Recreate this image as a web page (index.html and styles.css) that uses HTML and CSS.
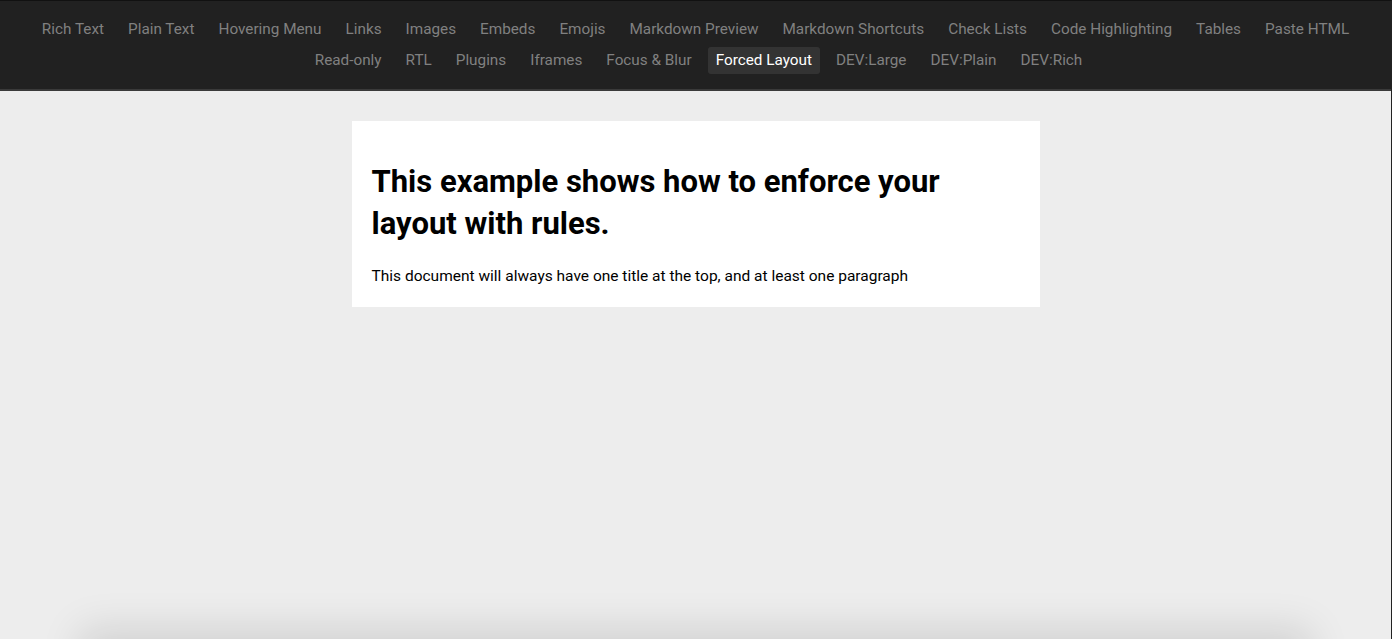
FILE: index.html
```html
<!DOCTYPE html>
<html>
<head>
<meta charset="utf-8">
<link rel="stylesheet" href="styles.css">
</head>
<body>
<div class="frame">
  <nav class="tabs">
    <div class="tab-row">
      <a class="tab">Rich Text</a>
      <a class="tab">Plain Text</a>
      <a class="tab">Hovering Menu</a>
      <a class="tab">Links</a>
      <a class="tab">Images</a>
      <a class="tab">Embeds</a>
      <a class="tab">Emojis</a>
      <a class="tab">Markdown Preview</a>
      <a class="tab">Markdown Shortcuts</a>
      <a class="tab">Check Lists</a>
      <a class="tab">Code Highlighting</a>
      <a class="tab">Tables</a>
      <a class="tab">Paste HTML</a>
    </div>
    <div class="tab-row tab-row-second">
      <a class="tab">Read-only</a>
      <a class="tab">RTL</a>
      <a class="tab">Plugins</a>
      <a class="tab">Iframes</a>
      <a class="tab">Focus &amp; Blur</a>
      <a class="tab active">Forced Layout</a>
      <a class="tab">DEV:Large</a>
      <a class="tab">DEV:Plain</a>
      <a class="tab">DEV:Rich</a>
    </div>
  </nav>
  <main class="example">
    <h1 class="title">This example shows how to enforce your layout with rules.</h1>
    <p class="para">This document will always have one title at the top, and at least one paragraph</p>
  </main>
  <div class="window-shadow"></div>
</div>
</body>
</html>
```

FILE: styles.css
```css
html, body {
  margin: 0;
  padding: 0;
  height: 100%;
}
body {
  background: #ededed;
  font-family: Roboto, "Liberation Sans", sans-serif;
  overflow: hidden;
}
.frame {
  min-height: 100%;
  box-sizing: border-box;
  border-right: 1px solid #222;
  border-top: 1px solid #111;
  position: relative;
  overflow: hidden;
}
.tabs {
  background: #212121;
  border-bottom: 2px solid #3a3a3a;
  padding: 15px 0 15px;
  display: flex;
  flex-direction: column;
  align-items: center;
  gap: 4px;
  margin-bottom: 30px;
}
.tab-row {
  display: flex;
  justify-content: center;
  gap: 8px;
  white-space: nowrap;
}
.tab-row-second {
  padding-left: 6px;
}
.tab {
  color: #808080;
  font-size: 15.3px;
  line-height: 19px;
  padding: 4px 8px;
  border-radius: 3px;
  text-decoration: none;
  cursor: pointer;
}
.tab.active {
  color: #fff;
  background: #333;
}
.example {
  width: 688px;
  box-sizing: border-box;
  margin: 0 auto;
  background: #fff;
  padding: 20px;
}
.title {
  font-size: 31px;
  line-height: 42px;
  font-weight: 700;
  margin: 20px 0 21px;
  color: #000;
  max-width: 600px;
}
.para {
  font-size: 15.5px;
  line-height: 21px;
  margin: 0;
  color: #000;
}
.window-shadow {
  position: absolute;
  left: 90px;
  right: 90px;
  bottom: -40px;
  height: 40px;
  box-shadow: 0 0 40px 10px rgba(0, 0, 0, 0.12);
}
```
